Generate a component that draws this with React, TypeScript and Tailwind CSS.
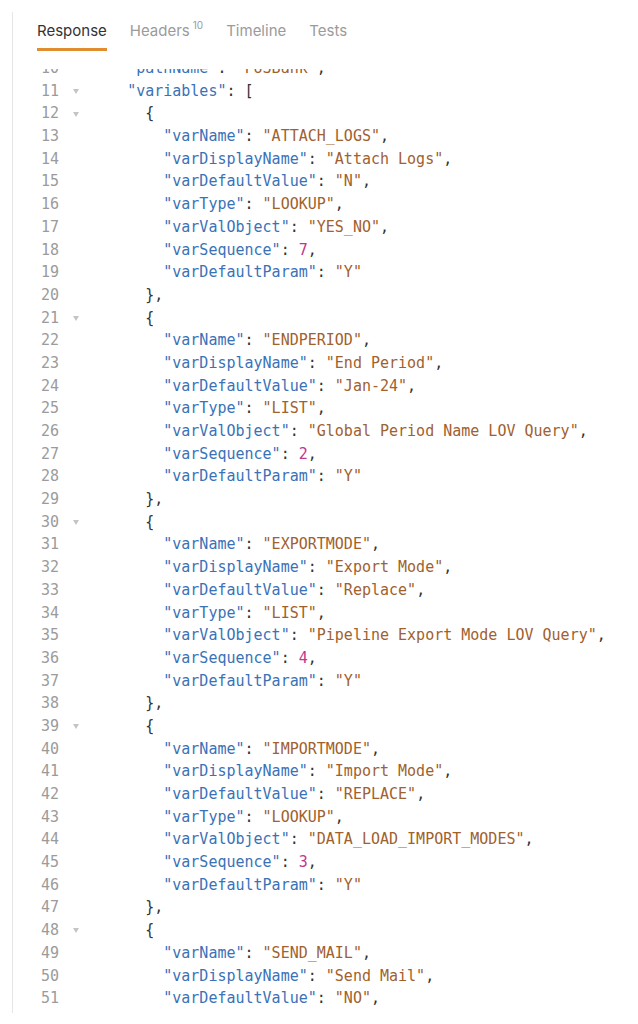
type Tok = { t: string; c?: 'k' | 's' | 'n' | 'p' };

const lines: { n: number; fold?: boolean; text: string }[] = [
  { n: 10, text: '    "pathName": "FUSBank",' },
  { n: 11, fold: true, text: '    "variables": [' },
  { n: 12, fold: true, text: '      {' },
  { n: 13, text: '        "varName": "ATTACH_LOGS",' },
  { n: 14, text: '        "varDisplayName": "Attach Logs",' },
  { n: 15, text: '        "varDefaultValue": "N",' },
  { n: 16, text: '        "varType": "LOOKUP",' },
  { n: 17, text: '        "varValObject": "YES_NO",' },
  { n: 18, text: '        "varSequence": 7,' },
  { n: 19, text: '        "varDefaultParam": "Y"' },
  { n: 20, text: '      },' },
  { n: 21, fold: true, text: '      {' },
  { n: 22, text: '        "varName": "ENDPERIOD",' },
  { n: 23, text: '        "varDisplayName": "End Period",' },
  { n: 24, text: '        "varDefaultValue": "Jan-24",' },
  { n: 25, text: '        "varType": "LIST",' },
  { n: 26, text: '        "varValObject": "Global Period Name LOV Query",' },
  { n: 27, text: '        "varSequence": 2,' },
  { n: 28, text: '        "varDefaultParam": "Y"' },
  { n: 29, text: '      },' },
  { n: 30, fold: true, text: '      {' },
  { n: 31, text: '        "varName": "EXPORTMODE",' },
  { n: 32, text: '        "varDisplayName": "Export Mode",' },
  { n: 33, text: '        "varDefaultValue": "Replace",' },
  { n: 34, text: '        "varType": "LIST",' },
  { n: 35, text: '        "varValObject": "Pipeline Export Mode LOV Query",' },
  { n: 36, text: '        "varSequence": 4,' },
  { n: 37, text: '        "varDefaultParam": "Y"' },
  { n: 38, text: '      },' },
  { n: 39, fold: true, text: '      {' },
  { n: 40, text: '        "varName": "IMPORTMODE",' },
  { n: 41, text: '        "varDisplayName": "Import Mode",' },
  { n: 42, text: '        "varDefaultValue": "REPLACE",' },
  { n: 43, text: '        "varType": "LOOKUP",' },
  { n: 44, text: '        "varValObject": "DATA_LOAD_IMPORT_MODES",' },
  { n: 45, text: '        "varSequence": 3,' },
  { n: 46, text: '        "varDefaultParam": "Y"' },
  { n: 47, text: '      },' },
  { n: 48, fold: true, text: '      {' },
  { n: 49, text: '        "varName": "SEND_MAIL",' },
  { n: 50, text: '        "varDisplayName": "Send Mail",' },
  { n: 51, text: '        "varDefaultValue": "NO",' },
  { n: 52, text: '        "varType": "LOOKUP",' },
];

// split a json line into coloured pieces
function tokenize(line: string): Tok[] {
  const out: Tok[] = [];
  const re = /("[^"]*")(\s*:)?|(-?\d+(?:\.\d+)?)|([\s]+)|([^\s"\d]+)/g;
  let m: RegExpExecArray | null;
  while ((m = re.exec(line))) {
    if (m[1]) {
      if (m[2]) {
        out.push({ t: m[1], c: 'k' });
        out.push({ t: m[2], c: 'p' });
      } else out.push({ t: m[1], c: 's' });
    } else if (m[3]) out.push({ t: m[3], c: 'n' });
    else if (m[4]) out.push({ t: m[4] });
    else out.push({ t: m[5], c: 'p' });
  }
  return out;
}

const color = {
  k: 'text-[#3a72b7]',
  s: 'text-[#9f612e]',
  n: 'text-[#c2368c]',
  p: 'text-[#333333]',
};

function Fold() {
  return (
    <svg width="6" height="5" viewBox="0 0 6 5" className="mt-[1px]">
      <path d="M0 0 L6 0 L3 5 Z" fill="#c4c4c4" />
    </svg>
  );
}

export default function App() {
  return (
    <div className="w-[638px] h-[1024px] bg-white pt-3 pl-3 overflow-hidden">
      <div className="h-[1001px] border-l border-[#e6e6e6] flex flex-col">
        <div className="h-[50px] flex items-start pl-6 gap-[23px] font-['Inter',sans-serif] text-[15px] leading-[20px] shrink-0">
          <div className="pt-[9px] pb-[7px] border-b-[3px] border-[#df8d2f] text-[#333333]">Response</div>
          <div className="pt-[9px] pb-[10px] text-[#9b9b9b] flex items-start">
            Headers
            <span className="ml-[3px] text-[10px] leading-[10px] -mt-[1px]">10</span>
          </div>
          <div className="pt-[9px] pb-[10px] text-[#9b9b9b]">Timeline</div>
          <div className="pt-[9px] pb-[10px] text-[#9b9b9b]">Tests</div>
        </div>
        <div className="mt-[7px] flex-1 overflow-hidden font-['DejaVu_Sans_Mono',monospace] text-[15px] leading-[22.7px]">
          <div className="-mt-[12px]">
            {lines.map((l) => (
              <div key={l.n} className="flex items-center h-[22.7px]">
                <span className="w-[46px] text-right text-[#9b9b9b] shrink-0">{l.n}</span>
                <span className="w-[32px] shrink-0 flex items-center pl-[14px]">{l.fold ? <Fold /> : null}</span>
                <span className="whitespace-pre">
                  {tokenize(l.text).map((tk, i) => (
                    <span key={i} className={tk.c ? color[tk.c] : ''}>
                      {tk.t}
                    </span>
                  ))}
                </span>
              </div>
            ))}
          </div>
        </div>
      </div>
    </div>
  );
}
